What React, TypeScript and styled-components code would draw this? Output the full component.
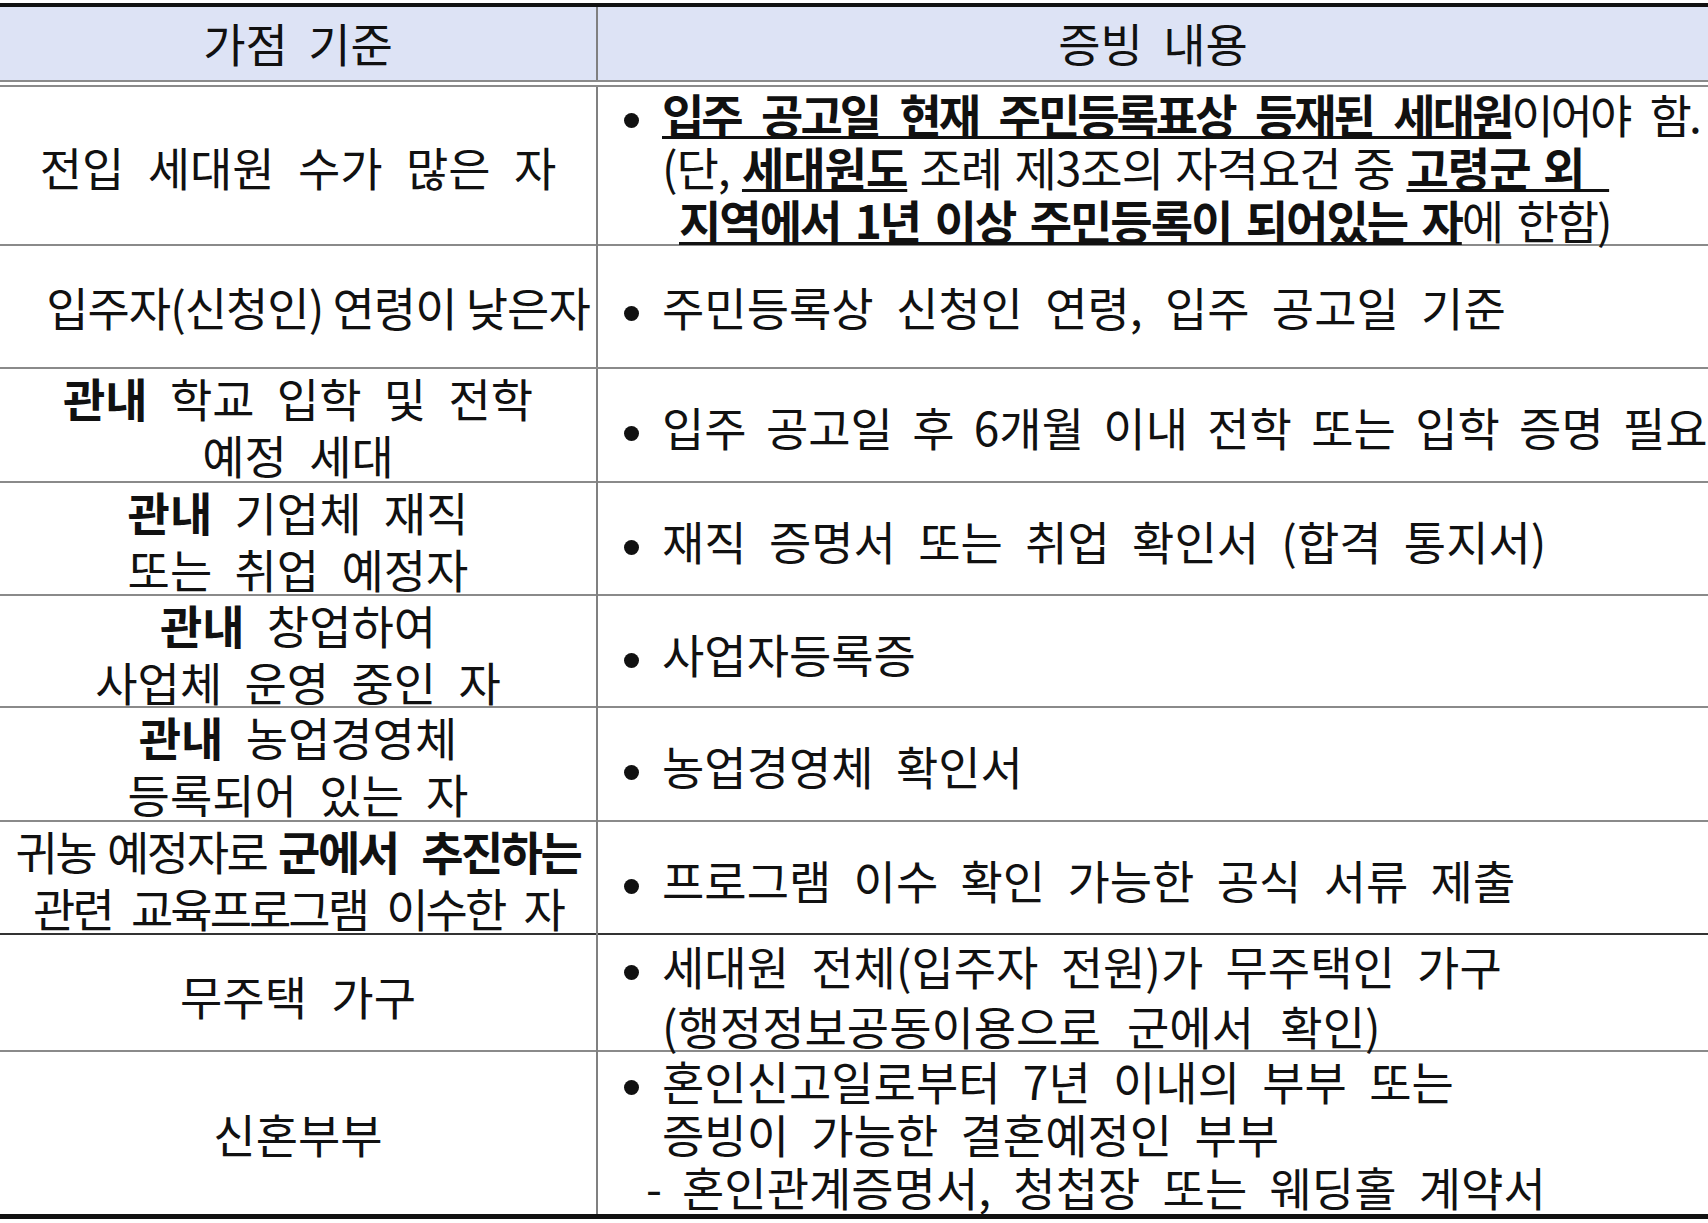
import React from 'react';
import styled, { createGlobalStyle } from 'styled-components';

const FRAME = '#111';
const GRID_LINE = '#8a8a8a';
const TEXT_SIZE = 46;
const WS = 12;

const GlobalStyle = createGlobalStyle`
  html, body {
    margin: 0;
    padding: 0;
    background: #fff;
    overflow: hidden;
  }
  body {
    font-family: "Noto Sans CJK KR", "Noto Sans", sans-serif;
    color: #111;
  }
`;

const Page = styled.div`
  width: 1708px;
  padding-top: 3px;
`;

const Table = styled.div`
  display: flex;
  flex-direction: column;
  border-top: 4px solid ${FRAME};
  border-bottom: 5px solid ${FRAME};
`;

const HeadRow = styled.div`
  display: grid;
  grid-template-columns: 598px 1fr;
  height: 80px;
  box-sizing: border-box;
  background: #dde3f5;
  background-clip: padding-box;
  border-bottom: 7px double ${GRID_LINE};
`;

const HeadCell = styled.div<{ $divider?: boolean }>`
  display: flex;
  align-items: center;
  justify-content: center;
  font-size: ${TEXT_SIZE}px;
  word-spacing: 10px;
  line-height: 1;
  padding-bottom: 4px;
  border-right: ${(p) => (p.$divider ? '2px solid #808080' : 'none')};
`;

const Row = styled.div<{ $h: number; $last: boolean; $dark?: boolean }>`
  display: grid;
  grid-template-columns: 598px 1fr;
  height: ${(p) => p.$h}px;
  box-sizing: border-box;
  border-bottom: ${(p) => (p.$last ? 'none' : `2px solid ${p.$dark ? '#333' : GRID_LINE}`)};
`;

const LeftCell = styled.div<{ $lh: number; $pl: number }>`
  display: flex;
  flex-direction: column;
  justify-content: center;
  align-items: center;
  padding-left: ${(p) => p.$pl}px;
  border-right: 2px solid #808080;
  font-size: ${TEXT_SIZE}px;
  line-height: ${(p) => p.$lh}px;
  text-align: center;
`;

const RightCell = styled.div<{ $lh: number }>`
  display: flex;
  flex-direction: column;
  justify-content: center;
  min-width: 0;
  padding-left: 26px;
  font-size: ${TEXT_SIZE}px;
  line-height: ${(p) => p.$lh}px;
`;

const Line = styled.div<{ $ls: number; $ws: number; $indent: number }>`
  white-space: pre;
  letter-spacing: ${(p) => p.$ls}px;
  word-spacing: ${(p) => p.$ws}px;
  padding-left: ${(p) => p.$indent}px;
`;

const B = styled.span`
  font-weight: 700;
`;

const Under = styled.span`
  font-weight: 700;
  text-decoration: underline;
  text-decoration-thickness: 3px;
  text-underline-offset: 3px;
`;

const Bullet = styled.span`
  display: inline-block;
  width: 15px;
  height: 15px;
  border-radius: 50%;
  background: #111;
  margin-right: 23px;
  vertical-align: middle;
`;

const Dash = styled.span`
  display: inline-block;
  width: 36px;
`;

type LineSpec = {
  content: React.ReactNode;
  ls?: number;
  ws?: number;
  indent?: number;
};

type RowSpec = {
  height: number;
  dark?: boolean;
  left: LineSpec[];
  leftLh?: number;
  leftPad?: number;
  right: LineSpec[];
  rightLh?: number;
};

const rows: RowSpec[] = [
  {
    height: 159,
    left: [{ content: '전입 세대원 수가 많은 자', ws: 13 }],
    right: [
      {
        content: (
          <>
            <Bullet />
            <Under>입주 공고일 현재 주민등록표상 등재된 세대원</Under>이어야 함.
          </>
        ),
        ls: -3,
        ws: 13,
      },
      {
        content: (
          <>
            {'(단, '}
            <Under>세대원도</Under>
            {' 조례 제3조의 자격요건 중 '}
            <Under>{'고령군 외\u00a0\u00a0'}</Under>
          </>
        ),
        ls: -1,
        ws: 3,
        indent: 38,
      },
      {
        content: (
          <>
            <Under>지역에서 1년 이상 주민등록이 되어있는 자</Under>
            {'에 한함)'}
          </>
        ),
        ls: -2,
        ws: 6,
        indent: 55,
      },
    ],
    rightLh: 53,
  },
  {
    height: 123,
    left: [{ content: '입주자(신청인) 연령이 낮은자', ls: -1, ws: 0 }],
    leftPad: 40,
    right: [{ content: <><Bullet />주민등록상 신청인 연령, 입주 공고일 기준</> }],
  },
  {
    height: 114,
    left: [
      { content: <><B>관내</B>{' 학교 입학 및 전학'}</> },
      { content: '예정 세대' },
    ],
    right: [{ content: <><Bullet />입주 공고일 후 6개월 이내 전학 또는 입학 증명 필요</>, ws: 9 }],
  },
  {
    height: 113,
    left: [
      { content: <><B>관내</B>{' 기업체 재직'}</> },
      { content: '또는 취업 예정자' },
    ],
    right: [{ content: <><Bullet />재직 증명서 또는 취업 확인서 (합격 통지서)</> }],
  },
  {
    height: 112,
    left: [
      { content: <><B>관내</B>{' 창업하여'}</> },
      { content: '사업체 운영 중인 자' },
    ],
    right: [{ content: <><Bullet />사업자등록증</> }],
  },
  {
    height: 114,
    left: [
      { content: <><B>관내</B>{' 농업경영체'}</> },
      { content: '등록되어 있는 자' },
    ],
    right: [{ content: <><Bullet />농업경영체 확인서</> }],
  },
  {
    height: 113,
    dark: true,
    left: [
      {
        content: (
          <>
            {'귀농 예정자로 '}
            <B>군에서</B>
            {'  '}
            <B>추진하는</B>
          </>
        ),
        ls: -2.5,
        ws: 4,
      },
      { content: '관련 교육프로그램 이수한 자', ls: -3, ws: 12 },
    ],
    right: [{ content: <><Bullet />프로그램 이수 확인 가능한 공식 서류 제출</> }],
  },
  {
    height: 117,
    left: [{ content: '무주택 가구', ws: 14 }],
    right: [
      { content: <><Bullet />세대원 전체(입주자 전원)가 무주택인 가구</> },
      { content: '(행정정보공동이용으로 군에서 확인)', indent: 38, ws: 16 },
    ],
    rightLh: 60,
  },
  {
    height: 162,
    left: [{ content: '신혼부부' }],
    right: [
      { content: <><Bullet />혼인신고일로부터 7년 이내의 부부 또는</> },
      { content: '증빙이 가능한 결혼예정인 부부', indent: 38 },
      {
        content: (
          <>
            <Dash>-</Dash>
            혼인관계증명서, 청첩장 또는 웨딩홀 계약서
          </>
        ),
        indent: 22,
      },
    ],
    rightLh: 53,
  },
];

const App = () => {
  return (
    <>
      <GlobalStyle />
      <Page>
        <Table>
          <HeadRow>
            <HeadCell $divider>가점 기준</HeadCell>
            <HeadCell>증빙 내용</HeadCell>
          </HeadRow>

          {rows.map((row, i) => (
            <Row key={i} $h={row.height} $last={i === rows.length - 1} $dark={row.dark}>
              <LeftCell $lh={row.leftLh || 57} $pl={row.leftPad || 0}>
                {row.left.map((line, j) => (
                  <Line key={j} $ls={line.ls ?? 0} $ws={line.ws ?? WS} $indent={0}>
                    {line.content}
                  </Line>
                ))}
              </LeftCell>
              <RightCell $lh={row.rightLh || 57}>
                {row.right.map((line, j) => (
                  <Line key={j} $ls={line.ls ?? 0} $ws={line.ws ?? WS} $indent={line.indent ?? 0}>
                    {line.content}
                  </Line>
                ))}
              </RightCell>
            </Row>
          ))}
        </Table>
      </Page>
    </>
  );
};

export default App;
